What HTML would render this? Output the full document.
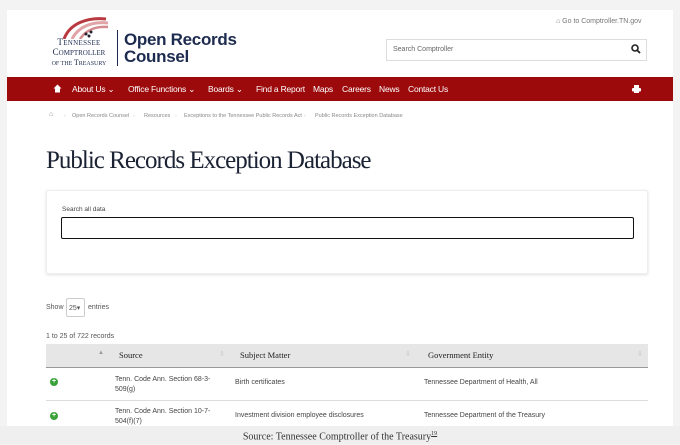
<!DOCTYPE html>
<html><head><meta charset="utf-8"><style>
*{box-sizing:border-box;margin:0;padding:0}
body{width:680px;height:444px;background:#f3f3f3;font-family:"Liberation Sans",sans-serif;position:relative;overflow:hidden;color:#333}
.card{position:absolute;left:7px;top:10px;width:666px;height:416px;background:#fff}
.abs{position:absolute}
.nav{left:7px;top:77px;width:666px;height:24px;background:#9c0a0c;color:#fff;font-size:8.5px;letter-spacing:-.2px}
.nav span{position:absolute;top:7px}
.crumb{font-size:5.5px;color:#888;top:113px}
.cap{left:0;top:426px;width:680px;height:18px;background:#efefef;font-family:"Liberation Serif",serif;font-size:10px;color:#333;text-align:center;line-height:16px}
th,td{text-align:left}
</style></head><body>
<div class="card"></div>
<!-- logo -->
<svg class="abs" style="left:58px;top:15px" width="52" height="24" viewBox="0 0 52 24">
<path d="M6 24 C12 8 30 2 48 4" stroke="#b8393f" stroke-width="3" fill="none"/>
<path d="M14 24 C20 12 34 6 50 8" stroke="#e0a3a6" stroke-width="3" fill="none"/>
<path d="M22 24 C28 15 38 11 50 12" stroke="#d48a8e" stroke-width="2.5" fill="none"/>
<circle cx="28" cy="19" r="1.5" fill="#223"/><circle cx="33" cy="17" r="1.5" fill="#223"/><circle cx="31" cy="21" r="1.5" fill="#223"/>
</svg>
<div class="abs" style="left:44px;top:38px;width:70px;font-family:'Liberation Serif',serif;color:#1d2b4f;text-align:center;line-height:9px">
<div style="font-size:9px;letter-spacing:.3px">T<span style="font-size:7px">ENNESSEE</span></div>
<div style="font-size:9px">C<span style="font-size:7px">OMPTROLLER</span></div>
<div style="font-size:6px">OF THE <span style="font-size:8px">T</span>REASURY</div>
</div>
<div class="abs" style="left:117px;top:30px;width:1px;height:36px;background:#1d2b4f"></div>
<div class="abs" style="left:124px;top:31px;font-size:17px;font-weight:bold;color:#1d2b4f;line-height:17px;letter-spacing:-.3px">Open Records<br>Counsel</div>
<!-- top right -->
<div class="abs" style="left:556px;top:18px;font-size:7px;color:#777">&#8962; Go to Comptroller.TN.gov</div>
<div class="abs" style="left:386px;top:39px;width:261px;height:22px;border:1px solid #ddd;font-size:7px;color:#666;padding:6px 6px">Search Comptroller</div>
<svg class="abs" style="left:631px;top:44px" width="10" height="10" viewBox="0 0 10 10"><circle cx="4" cy="4" r="3" stroke="#222" stroke-width="1.6" fill="none"/><path d="M6.2 6.2 9 9" stroke="#222" stroke-width="1.8"/></svg>
<!-- nav -->
<div class="abs nav">
<svg style="position:absolute;left:46px;top:7px" width="9" height="9" viewBox="0 0 9 9"><path d="M4.5 0.5 0.5 4.5H2V8.5H7V4.5H8.5Z" fill="#fff"/></svg>
<span style="left:65px">About Us &#8964;</span>
<span style="left:121px">Office Functions &#8964;</span>
<span style="left:201px">Boards &#8964;</span>
<span style="left:249px">Find a Report</span>
<span style="left:306px">Maps</span>
<span style="left:335px">Careers</span>
<span style="left:372px">News</span>
<span style="left:401px">Contact Us</span>
<svg style="position:absolute;left:625px;top:8px" width="9" height="8" viewBox="0 0 9 8"><rect x="2" y="0" width="5" height="3" fill="#fff"/><rect x="0" y="3" width="9" height="3.5" rx="1" fill="#fff"/><rect x="2" y="5.5" width="5" height="2.5" fill="#fff"/></svg>
</div>
<!-- breadcrumb -->
<div class="abs crumb" style="left:49px;font-size:7px;top:111px">&#8962;</div>
<div class="abs crumb" style="left:72px">Open Records Counsel</div>
<div class="abs crumb" style="left:144px">Resources</div>
<div class="abs crumb" style="left:184px">Exceptions to the Tennessee Public Records Act</div>
<div class="abs crumb" style="left:315px">Public Records Exception Database</div>
<div class="abs crumb" style="left:133px;color:#ccc">&#8250;</div><div class="abs crumb" style="left:175px;color:#ccc">&#8250;</div><div class="abs crumb" style="left:304px;color:#ccc">&#8250;</div><div class="abs crumb" style="left:64px;color:#ccc">&#8250;</div>
<!-- title -->
<div class="abs" style="left:46px;top:147px;font-family:'Liberation Serif',serif;font-size:25px;color:#1b2233;letter-spacing:-1px">Public Records Exception Database</div>
<!-- search card -->
<div class="abs" style="left:46px;top:190px;width:602px;height:84px;background:#fff;border:1px solid #eee;box-shadow:0 1px 3px rgba(0,0,0,.12);border-radius:2px"></div>
<div class="abs" style="left:62px;top:206px;font-size:6.5px;color:#444">Search all data</div>
<div class="abs" style="left:61px;top:217px;width:573px;height:22px;border:1.5px solid #111;border-radius:2px"></div>
<!-- show entries -->
<div class="abs" style="left:46px;top:304px;font-size:7px;color:#555">Show</div>
<div class="abs" style="left:66px;top:298px;width:19px;height:19px;border:1px solid #ccc;border-radius:2px;font-size:7px;color:#555;padding:5px 2px">25&#9662;</div>
<div class="abs" style="left:88px;top:304px;font-size:7px;color:#555">entries</div>
<div class="abs" style="left:46px;top:333px;font-size:7px;color:#555">1 to 25 of 722 records</div>
<!-- table -->
<div class="abs" style="left:46px;top:344px;width:602px;height:24px;background:#e6e6e6;border-bottom:1px solid #999"></div>
<div class="abs" style="left:98px;top:350px;font-size:6px;color:#999">&#9650;</div>
<div class="abs" style="left:119px;top:350px;font-family:'Liberation Serif',serif;font-size:8.5px;color:#222">Source</div>
<div class="abs" style="left:240px;top:350px;font-family:'Liberation Serif',serif;font-size:8.5px;color:#222">Subject Matter</div>
<div class="abs" style="left:428px;top:350px;font-family:'Liberation Serif',serif;font-size:8.5px;color:#222">Government Entity</div>
<div class="abs" style="left:219px;top:350px;font-size:7px;color:#ccc">&#8661;</div>
<div class="abs" style="left:405px;top:350px;font-size:7px;color:#ccc">&#8661;</div>
<div class="abs" style="left:637px;top:350px;font-size:7px;color:#ccc">&#8661;</div>
<div class="abs" style="left:46px;top:400px;width:602px;height:1px;background:#ddd"></div>
<div class="abs" style="left:50px;top:378px;width:8px;height:8px;border-radius:50%;background:#3aa13a;color:#fff;font-size:7px;line-height:8px;text-align:center;font-weight:bold">+</div>
<div class="abs" style="left:50px;top:412px;width:8px;height:8px;border-radius:50%;background:#3aa13a;color:#fff;font-size:7px;line-height:8px;text-align:center;font-weight:bold">+</div>
<div class="abs" style="left:115px;top:375px;font-size:7px;color:#444;line-height:10px">Tenn. Code Ann. Section 68-3-<br>509(g)</div>
<div class="abs" style="left:235px;top:379px;font-size:7px;color:#444">Birth certificates</div>
<div class="abs" style="left:424px;top:379px;font-size:7px;color:#444">Tennessee Department of Health, All</div>
<div class="abs" style="left:115px;top:407px;font-size:7px;color:#444;line-height:10px">Tenn. Code Ann. Section 10-7-<br>504(f)(7)</div>
<div class="abs" style="left:235px;top:412px;font-size:7px;color:#444">Investment division employee disclosures</div>
<div class="abs" style="left:424px;top:412px;font-size:7px;color:#444">Tennessee Department of the Treasury</div>
<div class="abs cap">Source: Tennessee Comptroller of the Treasury<sup style="font-size:6px;text-decoration:underline">19</sup></div>
</body></html>
